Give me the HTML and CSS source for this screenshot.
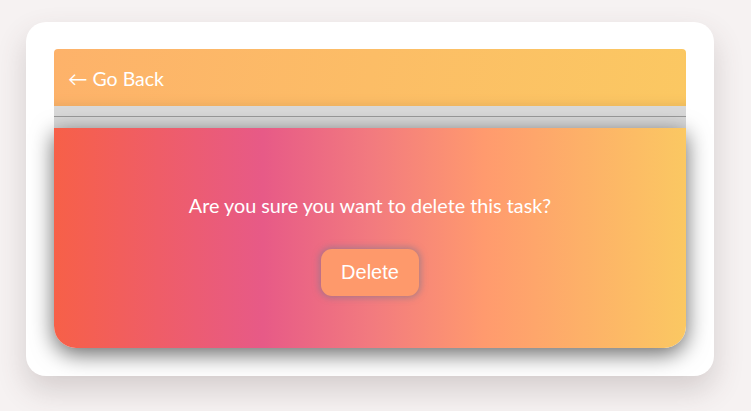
FILE: index.html
```html
<!DOCTYPE html>
<html>
<head>
<meta charset="utf-8">
<link rel="stylesheet" href="styles.css">
</head>
<body>
  <div class="card">
    <div class="header">
      <a class="back">← Go Back</a>
    </div>
    <div class="band"><div class="rule"></div></div>
    <div class="confirm">
      <p class="question">Are you sure you want to delete this task?</p>
      <button class="delete">Delete</button>
    </div>
  </div>
</body>
</html>
```
FILE: styles.css
```css
html {
  background: #f6f2f2;
  height: 100%;
}
html, body {
  margin: 0;
  padding: 0;
}
body {
  font-family: "Lato", "Open Sans", sans-serif;
  padding: 22px 37px 0 26px;
  min-height: 100%;
  box-sizing: border-box;
  background: #f6f2f2;
}
.card {
  width: 632px;
  height: 299px;
  background: #fff;
  border-radius: 20px;
  padding: 27px 28px 28px 28px;
  box-shadow: 0 14px 30px rgba(80, 60, 60, 0.2);
}
.header {
  height: 57px;
  border-radius: 4px 4px 0 0;
  background: linear-gradient(100deg, #fdb26a 0%, #fbc862 100%);
  display: flex;
  align-items: center;
  padding-left: 14px;
  box-shadow: inset 0 -10px 10px -8px rgba(200, 150, 80, 0.35);
}
.back {
  color: #fff;
  font-size: 19.5px;
  padding-top: 1px;
}
.band {
  height: 22px;
  background: #d8d8d8;
  display: flex;
  flex-direction: column;
  padding-top: 10px;
  box-sizing: border-box;
}
.rule {
  height: 1px;
  background: #9a9a9a;
}
.confirm {
  position: relative;
  height: 220px;
  border-radius: 0 0 22px 22px;
  background: linear-gradient(90deg, #f76048 0%, #e75a87 33%, #f27a7f 50%, #ff9a6e 68%, #fbc862 100%);
  box-shadow: 0 6px 22px rgba(0, 0, 0, 0.6);
  display: flex;
  flex-direction: column;
  align-items: center;
  box-sizing: border-box;
  padding-top: 65px;
}
.question {
  margin: 0;
  color: #fff;
  font-size: 19.8px;
  line-height: 24px;
}
.delete {
  margin-top: 32px;
  width: 98px;
  height: 47px;
  border: none;
  border-radius: 11px;
  background: #fe996b;
  color: #fff;
  font-family: "Liberation Sans", Arial, sans-serif;
  font-size: 20px;
  box-shadow: 0 0 6px 2px rgba(120, 120, 140, 0.55);
}
```
